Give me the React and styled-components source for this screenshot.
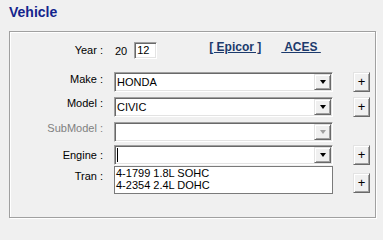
import React from 'react';
import styled, { createGlobalStyle } from 'styled-components';

const GlobalStyle = createGlobalStyle`
  html, body {
    margin: 0;
    padding: 0;
    background: #f0f0f0;
  }
  body {
    font-family: "Liberation Sans", Arial, sans-serif;
    font-size: 11px;
    color: #000;
  }
`;

const Page = styled.div`
  width: 383px;
  height: 221px;
  padding: 4px 0 0 9px;
  box-sizing: border-box;
  background: #f0f0f0;
  overflow: hidden;
`;

const Title = styled.div`
  font-size: 14px;
  font-weight: bold;
  line-height: 16px;
  color: #14248c;
`;

const Frame = styled.div`
  margin-top: 11px;
  width: 367px;
  height: 187px;
  box-sizing: border-box;
  padding-top: 10px;
  border: 1px solid #a0a0a0;
  box-shadow: 1px 1px 0 #fff, inset 1px 1px 0 #fff;
`;

const Row = styled.div`
  display: flex;
  align-items: ${p => (p.$center ? 'center' : 'flex-start')};
  height: ${p => p.$h || 20}px;
  margin-top: ${p => p.$top || 0}px;
`;

const Label = styled.div`
  width: 93px;
  margin-right: 11px;
  margin-top: ${p => p.$shift || 0}px;
  text-align: right;
  line-height: 13px;
  white-space: pre;
  color: ${p => (p.$disabled ? '#808080' : '#000')};
`;

const YearField = styled.div`
  display: flex;
  align-items: center;
  height: 100%;
`;

const Century = styled.span`
  margin-left: 1px;
  margin-right: 7px;
`;

const sunken = `
  border: 1px solid;
  border-color: #a0a0a0 #fff #fff #a0a0a0;
  box-shadow: inset 1px 1px 0 #696969, inset -1px -1px 0 #e3e3e3;
  padding: 1px;
  box-sizing: border-box;
  background: #fff;
`;

const raised = `
  border: 1px solid;
  border-color: #e3e3e3 #696969 #696969 #e3e3e3;
  box-shadow: inset 1px 1px 0 #fff, inset -1px -1px 0 #a0a0a0;
  background: #f0f0f0;
  box-sizing: border-box;
`;

const YearInput = styled.div`
  ${sunken}
  width: 23px;
  height: 17px;
  padding-left: 2px;
  line-height: 13px;
`;

const Link = styled.span`
  align-self: flex-start;
  margin-top: -2px;
  margin-left: ${p => p.$left}px;
  font-size: 12px;
  font-weight: bold;
  line-height: 14px;
  color: #1c3a6c;
  text-decoration: underline;
  white-space: pre;
`;

const Combo = styled.div`
  ${sunken}
  display: flex;
  width: 219px;
  height: 20px;
`;

const ComboText = styled.div`
  flex: 1;
  display: flex;
  align-items: center;
  padding-left: 1px;
  line-height: 16px;
  overflow: hidden;
  white-space: nowrap;
`;

const Caret = styled.span`
  width: 1px;
  height: 14px;
  background: #000;
`;

const ArrowButton = styled.div`
  ${raised}
  width: 17px;
  height: 16px;
  display: flex;
  align-items: center;
  justify-content: center;
`;

const Triangle = styled.span`
  width: 0;
  height: 0;
  border-left: 3.5px solid transparent;
  border-right: 3.5px solid transparent;
  border-top: 4px solid ${p => (p.$disabled ? '#a0a0a0' : '#000')};
`;

const PlusButton = styled.div`
  ${raised}
  width: 17px;
  height: 20px;
  margin-left: 20px;
  margin-top: ${p => p.$top || 0}px;
  display: flex;
  align-items: center;
  justify-content: center;
  font-size: 13px;
  line-height: 13px;
  padding-bottom: 1px;
`;

const ListBox = styled.div`
  width: 219px;
  height: 28px;
  box-sizing: border-box;
  border: 1px solid #7a7a7a;
  background: #fff;
  padding-left: 1px;
`;

const ListItem = styled.div`
  line-height: 12px;
  white-space: nowrap;
`;

const ComboBox = ({ value, disabled, caret }) => (
  <Combo>
    <ComboText>{caret ? <Caret /> : value}</ComboText>
    <ArrowButton>
      <Triangle $disabled={disabled} />
    </ArrowButton>
  </Combo>
);

export default function App() {
  return (
    <Page>
      <GlobalStyle />
      <Title>Vehicle</Title>
      <Frame>
        <Row $h={17} $center>
          <Label>Year :</Label>
          <YearField>
            <Century>20</Century>
            <YearInput>12</YearInput>
            <Link $left={52}>[ Epicor ]</Link>
            <Link $left={20}> ACES </Link>
          </YearField>
        </Row>

        <Row $top={13}>
          <Label $shift={1}>Make :</Label>
          <ComboBox value="HONDA" />
          <PlusButton>+</PlusButton>
        </Row>

        <Row $top={5}>
          <Label>Model :</Label>
          <ComboBox value="CIVIC" />
          <PlusButton>+</PlusButton>
        </Row>

        <Row $top={5}>
          <Label $disabled>SubModel :</Label>
          <ComboBox disabled />
        </Row>

        <Row $top={3}>
          <Label $shift={4}>Engine :</Label>
          <ComboBox caret />
          <PlusButton>+</PlusButton>
        </Row>

        <Row $top={1} $h={28}>
          <Label $shift={4}>Tran :</Label>
          <ListBox>
            <ListItem>4-1799 1.8L SOHC</ListItem>
            <ListItem>4-2354 2.4L DOHC</ListItem>
          </ListBox>
          <PlusButton $top={7}>+</PlusButton>
        </Row>
      </Frame>
    </Page>
  );
}
